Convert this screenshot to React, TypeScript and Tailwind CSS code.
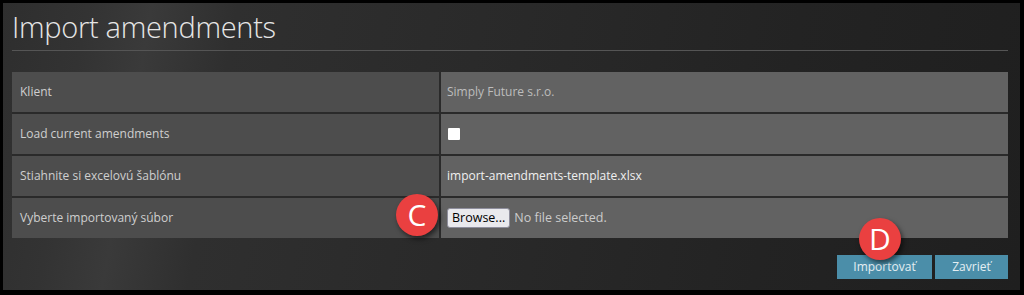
import React from "react";

const rows = [
  { label: "Klient", kind: "client" },
  { label: "Load current amendments", kind: "check" },
  { label: "Stiahnite si excelovú šablónu", kind: "link" },
  { label: "Vyberte importovaný súbor", kind: "file" },
];

function Badge({ letter }: { letter: string }) {
  return (
    <div className="flex h-[42px] w-[42px] items-center justify-center rounded-full bg-[#ea4040] text-[30px] leading-none text-white shadow-[2px_3px_5px_rgba(0,0,0,0.55)]">
      {letter}
    </div>
  );
}

export default function App() {
  return (
    <div className="h-[295px] w-[1024px] bg-black pb-[5px] pl-[3px] pr-[4px] pt-[3px] font-['Open_Sans',sans-serif]">
      <div className="relative h-full w-full overflow-hidden bg-[linear-gradient(100deg,#2e2e2e_0%,#333_8%,#3a3a3a_14%,#2f2f2f_22%,#2a2a2a_45%,#232323_75%,#1f1f1f_100%)] pl-[9px] pr-[12px]">
        {/* Header */}
        <h1 className="pt-[5px] text-[29px] font-light leading-[38px] tracking-[-0.3px] text-[#e6e6e6]">
          Import amendments
        </h1>
        <div className="mt-[4px] h-px bg-[#555]" />

        {/* Form table */}
        <div className="mt-[21px] flex flex-col gap-[2px] bg-[#2a2a2a] text-[12px]">
          {rows.map((row) => (
            <div key={row.label} className="flex h-[40px] gap-[2px]">
              <div className="flex w-[427px] items-center bg-[#4d4d4d] pl-[8px] text-[#cfcfcf]">
                {row.label}
              </div>
              <div className="relative flex flex-1 items-center bg-[#626262] pl-[6px]">
                {row.kind === "client" && <span className="text-[#bdbdbd]">Simply Future s.r.o.</span>}
                {row.kind === "check" && <span className="ml-px block h-[12px] w-[12px] rounded-[1px] bg-white" />}
                {row.kind === "link" && <span className="text-[#f0f0f0]">import-amendments-template.xlsx</span>}
                {row.kind === "file" && (
                  <div className="flex items-center gap-[4px]">
                    <span className="rounded-[3px] border border-[#8f8f9d] bg-[#e9e9ed] px-[4px] py-[1px] text-[12.5px] leading-[16px] text-black">
                      Browse...
                    </span>
                    <span className="text-[12.5px] text-[#cccccc]">No file selected.</span>
                  </div>
                )}
              </div>
            </div>
          ))}
        </div>

        {/* Actions */}
        <div className="mt-[17px] flex justify-end gap-[3px] text-[12px] text-[#e4eef3]">
          <button className="h-[24px] w-[95px] bg-[#4b8ea9]">Importovať</button>
          <button className="h-[24px] w-[73px] bg-[#4b8ea9]">Zavrieť</button>
        </div>

        {/* Callout badges */}
        <div className="absolute left-[393px] top-[191px]">
          <Badge letter="C" />
        </div>
        <div className="absolute left-[856px] top-[215px]">
          <Badge letter="D" />
        </div>
      </div>
    </div>
  );
}
